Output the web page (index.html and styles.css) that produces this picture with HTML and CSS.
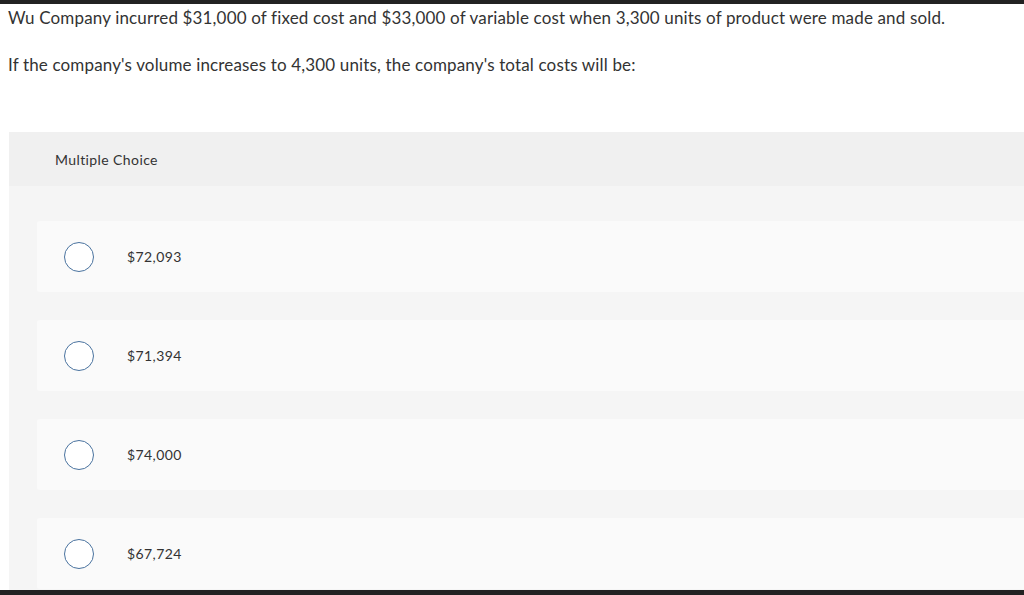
FILE: index.html
```html
<!DOCTYPE html>
<html>
<head>
<meta charset="utf-8">
<link rel="stylesheet" href="styles.css">
</head>
<body>
<div class="topbar"></div>
<div class="question">
  <p class="q-line first">Wu Company incurred $31,000 of fixed cost and $33,000 of variable cost when 3,300 units of product were made and sold.</p>
  <p class="q-line second">If the company's volume increases to 4,300 units, the company's total costs will be:</p>
</div>
<div class="panel">
  <div class="panel-head">Multiple Choice</div>
  <div class="panel-body">
    <div class="option"><span class="radio"></span><span class="opt-text">$72,093</span></div>
    <div class="option"><span class="radio"></span><span class="opt-text">$71,394</span></div>
    <div class="option"><span class="radio"></span><span class="opt-text">$74,000</span></div>
    <div class="option"><span class="radio"></span><span class="opt-text">$67,724</span></div>
  </div>
</div>
<div class="bottombar"></div>
</body>
</html>
```
FILE: styles.css
```css
html, body {
  margin: 0;
  padding: 0;
  background: #fff;
  height: 595px;
  overflow: hidden;
}
body {
  font-family: "Lato", "Open Sans", sans-serif;
  color: #333;
  display: flex;
  flex-direction: column;
}
.topbar {
  height: 4px;
  background: #222;
  flex: none;
}
.question {
  padding: 0 8px;
}
.q-line {
  margin: 0;
  font-size: 17px;
  line-height: 20px;
  letter-spacing: 0.15px;
}
.first {
  margin-top: 4px;
}
.second {
  margin-top: 26.5px;
}
.panel {
  margin: 57.5px 0 0 9px;
  flex: 1;
  display: flex;
  flex-direction: column;
}
.panel-head {
  height: 54px;
  background: #f0f0f0;
  display: flex;
  align-items: center;
  padding-left: 46px;
  font-size: 14px;
  letter-spacing: 0.4px;
  flex: none;
}
.panel-body {
  flex: 1;
  background: #f5f5f5;
  padding: 35px 0 0 28px;
  display: flex;
  flex-direction: column;
  gap: 28px;
}
.option {
  height: 71px;
  background: #fafafa;
  border-radius: 3px 0 0 3px;
  display: flex;
  align-items: center;
  padding-left: 27px;
  flex: none;
}
.radio {
  width: 28px;
  height: 28px;
  border: 1.5px solid #4a739f;
  border-radius: 50%;
  background: #fff;
  flex: none;
}
.opt-text {
  margin-left: 33px;
  font-size: 14px;
  letter-spacing: 0.4px;
}
.bottombar {
  height: 5px;
  background: #222;
  flex: none;
}
```
